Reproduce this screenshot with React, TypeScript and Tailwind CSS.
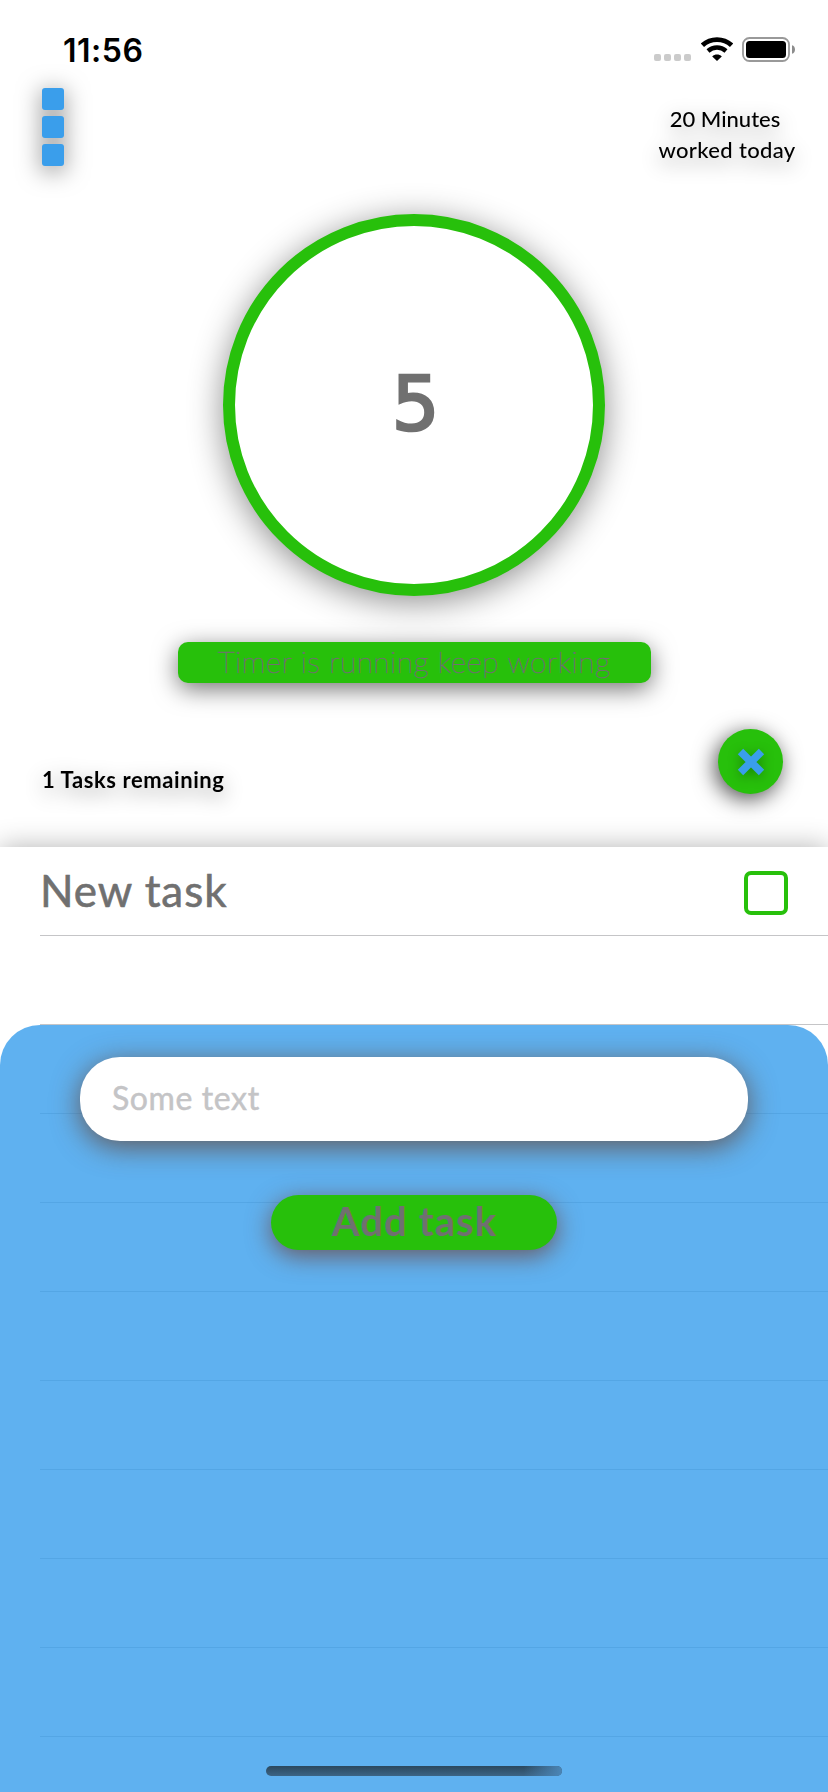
import React from "react";

function StatusBar() {
  return (
    <div className="flex h-[88px] items-start justify-between pl-[63px] pr-[32px] pt-[30px]">
      <span className="pt-px font-['Inter',sans-serif] text-[32px] font-semibold leading-[39px] tracking-[0.5px] text-black">
        11:56
      </span>
      <div className="flex pt-[7px]">
        <div className="flex gap-[3px] pr-[10px] pt-[17px]">
          {[0, 1, 2, 3].map((i) => (
            <span key={i} className="size-[7px] rounded-[2px] bg-[#cbcbcb]" />
          ))}
        </div>
        <svg width="32" height="24" viewBox="0 0 32 24" fill="none" stroke="#000">
          <path d="M1.4 8.2C9.6 .7 22.4 .7 30.6 8.2" strokeWidth="4.8" />
          <path d="M7 14C12.2 9.4 19.8 9.4 25 14" strokeWidth="4.4" />
          <path d="M16 24L11.2 19.4C13.8 17 18.2 17 20.8 19.4Z" fill="#000" stroke="none" />
        </svg>
        <svg width="54" height="26" viewBox="0 0 54 26" className="ml-[9px]">
          <rect x="1" y="1" width="46" height="23" rx="6.5" fill="none" stroke="#999" strokeWidth="1.8" />
          <rect x="4" y="4" width="40" height="17" rx="3.5" fill="#000" />
          <path d="M50 8.2C54 9.2 54 15.8 50 16.8Z" fill="#8c8c8c" />
        </svg>
      </div>
    </div>
  );
}

function TopRow() {
  return (
    <div className="flex h-[126px] items-start justify-between pl-[42px] pr-[30px]">
      <div className="flex flex-col gap-[6px] drop-shadow-[0_4px_12px_rgba(0,0,0,0.5)]">
        <span className="size-[22px] rounded-[3px] bg-[#3a9eeb]" />
        <span className="size-[22px] rounded-[3px] bg-[#3a9eeb]" />
        <span className="size-[22px] rounded-[3px] bg-[#3a9eeb]" />
      </div>
      <div className="w-[142px] whitespace-nowrap pt-[15px] text-center text-[22px] font-medium leading-[31px] text-black drop-shadow-[0_6px_10px_rgba(0,0,0,0.4)]">
        <p className="pr-[4px]">20 Minutes</p>
        <p className="tracking-[0.35px]">worked today</p>
      </div>
    </div>
  );
}

function Row({ label }: { label?: string }) {
  return (
    <li className="ml-[40px] flex h-[89px] items-center justify-between border-b border-[#c5c5c7] pr-[40px]">
      {label && (
        <>
          <span className="pb-[2px] text-[44px] leading-[54px] tracking-[0.95px] text-[#707070] [-webkit-text-stroke:0.6px_#707070]">
            {label}
          </span>
          <span className="mt-[3px] size-[44px] rounded-[7px] border-4 border-[#27c00b]" />
        </>
      )}
    </li>
  );
}

export default function App() {
  return (
    <div className="relative flex h-[1792px] w-[828px] flex-col overflow-hidden bg-white font-['Lato',sans-serif]">
      <StatusBar />
      <TopRow />
      <div className="flex flex-col items-center">
        <div className="flex size-[382px] items-center justify-center rounded-full border-[12px] border-[#27c00b] bg-white shadow-[0_6px_34px_rgba(0,0,0,0.45)]">
          <span className="pb-[2px] pl-[3px] font-['DejaVu_Sans',sans-serif] text-[75px] leading-none text-[#707070] [-webkit-text-stroke:2.6px_#707070]">
            5
          </span>
        </div>
        <div className="mt-[46px] flex h-[41px] w-[473px] items-center justify-center rounded-[10px] bg-[#27c00b] shadow-[0_6px_24px_rgba(0,0,0,0.55)]">
          <span className="whitespace-nowrap pb-[3px] text-[30px] font-thin leading-none tracking-[0.4px] text-[#707070] [-webkit-text-stroke:0.6px_#707070]">
            Timer is running keep working
          </span>
        </div>
      </div>
      <div className="flex h-[164px] items-start justify-between pl-[42px] pr-[45px]">
        <p className="mt-[83px] whitespace-nowrap text-[22px] font-bold leading-[27px] tracking-[0.58px] text-black drop-shadow-[0_6px_10px_rgba(0,0,0,0.4)]">
          1 Tasks remaining
        </p>
        <div className="mt-[46px] flex size-[65px] items-center justify-center rounded-full bg-[#27c00b] shadow-[-3px_5px_22px_rgba(0,0,0,0.7)]">
          <svg width="34" height="34" viewBox="0 0 34 34" className="drop-shadow-[0_3px_6px_rgba(0,0,0,0.3)]">
            <path d="M6.5 6.5L27.5 27.5M27.5 6.5L6.5 27.5" stroke="#3a9eeb" strokeWidth="7.6" />
          </svg>
        </div>
      </div>
      <ul className="h-[945px] bg-white shadow-[0_0_26px_rgba(0,0,0,0.3)]">
        <Row label="New task" />
        {Array.from({ length: 9 }, (_, i) => (
          <Row key={i} />
        ))}
      </ul>
      <div className="absolute inset-x-0 bottom-0 flex h-[767px] flex-col items-center rounded-t-[40px] bg-[rgba(55,158,236,0.8)] pt-[32px]">
        <div className="flex h-[84px] w-[668px] items-center rounded-[40px] bg-white pl-[32px] shadow-[0_6px_28px_rgba(100,60,40,0.75)]">
          <span className="pb-[2px] text-[32px] tracking-[0.6px] text-[#c4c4c6] [-webkit-text-stroke:0.5px_#c4c4c6]">
            Some text
          </span>
        </div>
        <button className="mt-[54px] flex h-[55px] w-[286px] items-center justify-center rounded-full bg-[#27c00b] pb-[4px] pl-px text-[40px] font-bold leading-none tracking-[1.1px] text-[#707070] shadow-[0_6px_24px_rgba(110,60,50,0.75)]">
          Add task
        </button>
        <div className="mb-[16px] mt-auto h-[10px] w-[296px] overflow-hidden rounded-full bg-linear-to-b from-[#2b485e] to-[#3c6485]">
          <div className="h-full bg-linear-to-r from-transparent from-87% to-[#4b86b7]" />
        </div>
      </div>
    </div>
  );
}
